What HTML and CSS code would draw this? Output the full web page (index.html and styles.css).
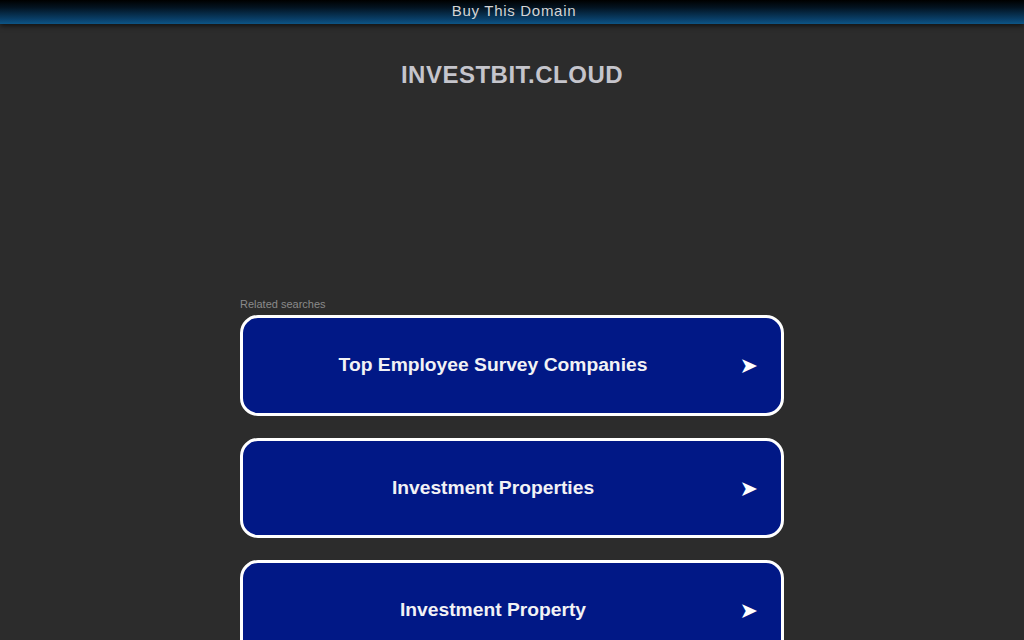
FILE: index.html
```html
<!DOCTYPE html>
<html lang="en">
<head>
<meta charset="utf-8">
<title>investbit.cloud</title>
<link rel="stylesheet" href="styles.css">
</head>
<body>
<div class="topbar"><a class="buy" href="#">Buy This Domain</a></div>
<main class="page">
  <h1 class="domain">INVESTBIT.CLOUD</h1>
  <div class="adspace"></div>
  <section class="related">
    <div class="related-label">Related searches</div>
    <a class="card" href="#"><span class="card-text">Top Employee Survey Companies</span><span class="arrow">&#10148;</span></a>
    <a class="card" href="#"><span class="card-text">Investment Properties</span><span class="arrow">&#10148;</span></a>
    <a class="card" href="#"><span class="card-text">Investment Property</span><span class="arrow">&#10148;</span></a>
  </section>
</main>
</body>
</html>
```

FILE: styles.css
```css
html, body {
  margin: 0;
  padding: 0;
}
body {
  background: #2c2c2c;
  font-family: "Liberation Sans", Arial, sans-serif;
  overflow: hidden;
}
.topbar {
  height: 24px;
  background: linear-gradient(to bottom, #000000 0%, #03121f 30%, #0a4470 85%, #0d5585 100%);
  box-shadow: 0 2px 5px rgba(0,0,0,0.6);
  display: flex;
  align-items: flex-start;
  justify-content: center;
}
.buy {
  color: #d4d4d4;
  font-size: 15px;
  letter-spacing: 0.7px;
  text-decoration: none;
  line-height: 22px;
  margin-left: 4px;
}
.page {
  width: 544px;
  margin: 0 auto;
  display: flex;
  flex-direction: column;
}
.domain {
  margin: 37px 0 0;
  text-align: center;
  font-size: 24px;
  line-height: 28px;
  font-weight: bold;
  color: #c5c5cc;
  letter-spacing: 0.5px;
}
.adspace {
  height: 208.5px;
}
.related {
  display: flex;
  flex-direction: column;
  gap: 22px;
}
.related-label {
  font-size: 11px;
  color: #8a8a8a;
  line-height: 13px;
  margin-bottom: -17.5px;
}
.card {
  height: 94.5px;
  border: 3px solid #ffffff;
  border-radius: 18px;
  background: #011886;
  display: flex;
  align-items: center;
  justify-content: center;
  position: relative;
  text-decoration: none;
  color: #ffffff;
}
.card-text {
  font-size: 19.25px;
  font-weight: bold;
  color: #f2f2f5;
  margin-right: 38px;
}
.arrow {
  position: absolute;
  right: 23px;
  top: 50%;
  transform: translateY(-50%);
  font-size: 22px;
  color: #ffffff;
  font-family: "DejaVu Sans", sans-serif;
}
```
